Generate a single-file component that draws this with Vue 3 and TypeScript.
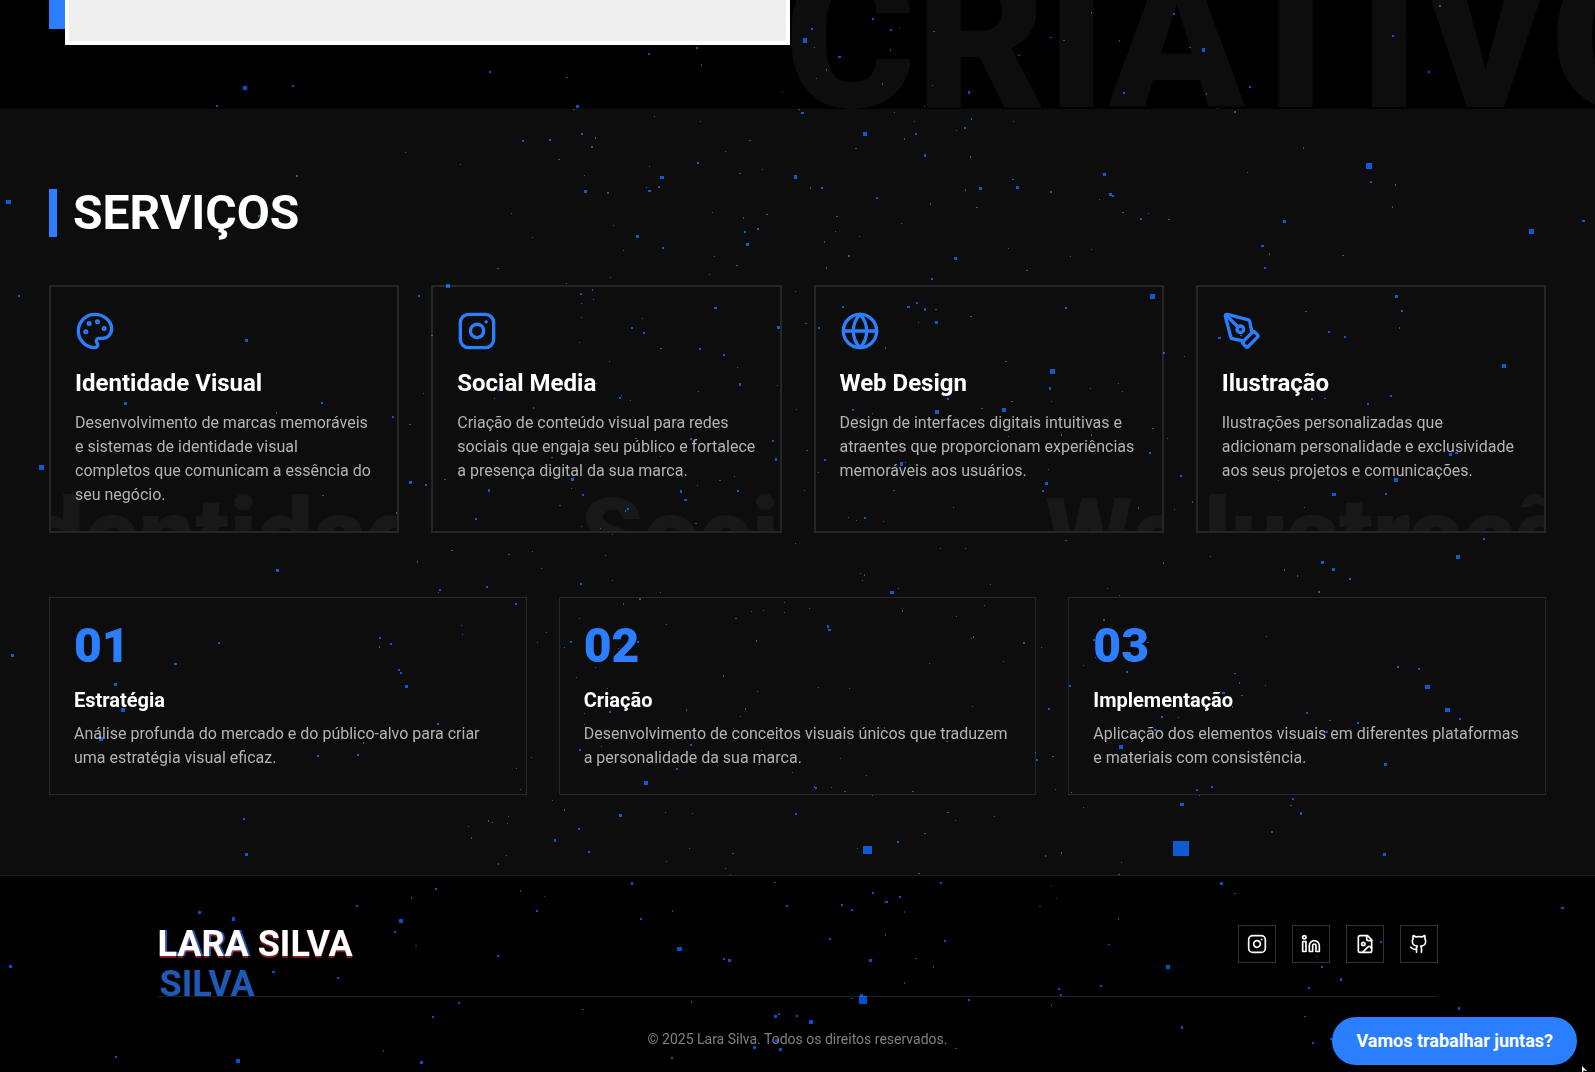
<script setup lang="ts">
interface Service {
  icon: 'palette' | 'instagram' | 'globe' | 'pen'
  title: string
  text: string
}

interface Step {
  number: string
  title: string
  text: string
}

const services: Service[] = [
  {
    icon: 'palette',
    title: 'Identidade Visual',
    text: 'Desenvolvimento de marcas memoráveis e sistemas de identidade visual completos que comunicam a essência do seu negócio.',
  },
  {
    icon: 'instagram',
    title: 'Social Media',
    text: 'Criação de conteúdo visual para redes sociais que engaja seu público e fortalece a presença digital da sua marca.',
  },
  {
    icon: 'globe',
    title: 'Web Design',
    text: 'Design de interfaces digitais intuitivas e atraentes que proporcionam experiências memoráveis aos usuários.',
  },
  {
    icon: 'pen',
    title: 'Ilustração',
    text: 'Ilustrações personalizadas que adicionam personalidade e exclusividade aos seus projetos e comunicações.',
  },
]

const steps: Step[] = [
  {
    number: '01',
    title: 'Estratégia',
    text: 'Análise profunda do mercado e do público-alvo para criar uma estratégia visual eficaz.',
  },
  {
    number: '02',
    title: 'Criação',
    text: 'Desenvolvimento de conceitos visuais únicos que traduzem a personalidade da sua marca.',
  },
  {
    number: '03',
    title: 'Implementação',
    text: 'Aplicação dos elementos visuais em diferentes plataformas e materiais com consistência.',
  },
]

const socials: string[] = ['Instagram', 'LinkedIn', 'Behance', 'GitHub']

const firstWord = (title: string): string => title.split(' ')[0]

// Particle field: x, y, width and (when it differs) height of each pixel block.
const particles: number[][] = [
  [243, 86, 4], [292, 85, 2], [216, 105, 2], [489, 71, 2], [405, 152, 1], [460, 164, 1], [522, 140, 2], [296, 175, 2],
  [6, 200, 5, 4], [258, 215, 2], [511, 213, 1], [497, 268, 2, 1], [648, 53, 2], [696, 47, 2], [701, 64, 1, 2],
  [566, 77, 2, 1], [576, 105, 3], [573, 109, 2, 1], [782, 92, 1], [811, 28, 2], [803, 38, 4, 5], [814, 47, 1],
  [838, 56, 3, 2], [826, 69, 1, 2], [816, 78, 1], [872, 18, 2], [890, 29, 2], [899, 27, 1], [933, 31, 2, 1],
  [890, 49, 1, 2], [882, 83, 1, 2], [932, 85, 1], [968, 91, 2, 3], [1018, 55, 2, 1], [1050, 37, 2, 1], [1063, 40, 2, 1],
  [924, 106, 1], [798, 109, 2, 1], [801, 112, 3, 2], [894, 112, 1], [914, 121, 1], [971, 118, 1, 2], [964, 127, 2],
  [956, 130, 1], [1013, 121, 1], [654, 116, 1], [700, 121, 1], [581, 133, 2], [595, 137, 1, 2], [549, 139, 2],
  [591, 146, 2], [558, 159, 2, 1], [584, 175, 1], [584, 190, 3], [607, 192, 2], [649, 166, 1], [660, 176, 4, 3],
  [697, 162, 2], [725, 151, 1], [749, 140, 2, 1], [762, 169, 1], [739, 173, 2, 1], [646, 187, 1], [648, 190, 3, 2],
  [658, 186, 2], [794, 175, 3, 4], [810, 187, 1, 2], [821, 187, 2], [863, 132, 4], [855, 148, 2, 1], [904, 138, 1, 2],
  [915, 133, 2], [924, 154, 2, 3], [970, 156, 1, 2], [876, 197, 2], [930, 203, 1, 2], [965, 189, 1, 2], [979, 187, 3],
  [1012, 179, 2, 1], [1016, 186, 3], [1050, 191, 2], [976, 207, 2, 1], [712, 212, 1], [743, 217, 1, 2], [766, 214, 2, 1],
  [757, 228, 2], [744, 231, 2], [746, 243, 3], [636, 235, 3], [613, 225, 1], [623, 250, 1], [662, 247, 2], [532, 237, 1],
  [714, 256, 1], [736, 265, 2, 1], [836, 216, 2, 1], [835, 231, 1], [859, 236, 1], [824, 241, 1, 2], [848, 255, 2],
  [826, 267, 1, 2], [901, 223, 1], [954, 257, 3], [1008, 248, 1], [1091, 12, 1, 2], [1119, 40, 1, 2], [1173, 13, 2],
  [1189, 47, 2, 1], [1202, 48, 3, 4], [1123, 92, 2], [1206, 93, 1, 2], [1249, 86, 2], [1217, 108, 1], [1234, 111, 2],
  [1392, 35, 2], [1428, 71, 2], [1439, 5, 2], [1303, 147, 1, 2], [1366, 163, 6], [1370, 181, 2], [1395, 184, 1, 2],
  [1247, 172, 1], [1103, 173, 3], [1109, 193, 3], [1112, 195, 2], [1099, 199, 1], [1122, 212, 2, 1], [1148, 213, 1],
  [1140, 218, 2], [1168, 219, 2, 1], [1392, 206, 1, 2], [1283, 220, 3], [1261, 245, 3, 2], [1269, 253, 1, 2],
  [1264, 267, 2], [1342, 255, 2, 1], [1091, 249, 1], [1070, 256, 1], [1529, 229, 5], [1582, 220, 3, 2],
  [18, 295, 2], [418, 295, 2], [245, 339, 3], [124, 402, 3], [321, 402, 2], [276, 412, 1, 2], [392, 416, 2],
  [409, 424, 2, 1], [423, 393, 1], [39, 465, 5], [409, 481, 3], [425, 484, 2], [322, 495, 2, 1], [396, 512, 1, 2],
  [446, 284, 4], [431, 335, 2, 1], [475, 389, 2, 1], [497, 389, 2], [494, 398, 1], [444, 479, 2, 1], [488, 489, 2, 3],
  [475, 518, 2], [451, 550, 2, 1], [508, 554, 2, 1], [610, 277, 1], [566, 283, 1], [592, 289, 1, 2], [593, 299, 1],
  [580, 293, 2], [581, 303, 1], [581, 317, 1], [579, 342, 1], [609, 361, 1], [631, 327, 2], [642, 318, 1], [643, 332, 2],
  [660, 348, 2, 1], [699, 348, 2], [714, 307, 3, 2], [709, 274, 1], [723, 354, 2], [737, 367, 1], [739, 383, 2, 3],
  [698, 391, 1], [777, 326, 3], [777, 385, 1], [795, 291, 1], [805, 323, 2, 1], [796, 409, 1], [818, 327, 2],
  [842, 306, 2], [907, 306, 3, 2], [916, 302, 2], [924, 308, 2, 3], [935, 309, 2, 1], [935, 321, 3], [918, 322, 1],
  [885, 347, 1, 2], [970, 316, 2, 1], [931, 278, 2], [1026, 270, 2, 1], [1005, 361, 2, 1], [1050, 369, 5],
  [1049, 387, 2, 3], [1051, 401, 1], [1011, 401, 2, 1], [1002, 408, 4], [981, 408, 2, 1], [935, 410, 4], [947, 398, 2],
  [872, 413, 1], [852, 409, 2], [933, 451, 2], [1008, 436, 1], [1061, 434, 1, 2], [619, 397, 2], [621, 395, 1],
  [630, 400, 1], [595, 383, 2, 1], [533, 407, 1, 2], [635, 438, 2, 1], [690, 438, 2], [675, 422, 2, 1], [660, 456, 1],
  [551, 457, 2, 1], [551, 472, 1, 2], [772, 440, 2], [775, 458, 2, 3], [725, 449, 1], [571, 478, 3], [571, 488, 1],
  [582, 494, 2], [559, 505, 2, 1], [682, 476, 1], [680, 490, 2, 3], [684, 499, 3, 2], [697, 485, 1], [719, 480, 2, 1],
  [734, 476, 1], [737, 490, 2], [695, 523, 2, 1], [627, 508, 2], [625, 510, 1, 2], [581, 526, 1], [600, 528, 1],
  [612, 534, 1], [532, 551, 1], [605, 555, 1], [795, 543, 1], [806, 450, 2, 1], [824, 459, 2], [818, 472, 1],
  [804, 490, 1], [900, 462, 3, 4], [905, 462, 1], [893, 490, 2, 1], [953, 507, 1], [848, 517, 1], [856, 520, 1],
  [864, 517, 2], [883, 521, 1], [1045, 482, 3], [1042, 490, 2], [1048, 469, 1], [940, 548, 1], [965, 548, 1],
  [1150, 294, 5], [1065, 307, 2], [1163, 352, 2], [1184, 356, 1], [1118, 383, 1], [1090, 388, 1], [1122, 391, 1],
  [1152, 428, 2, 1], [1167, 438, 1], [1091, 434, 1, 2], [1149, 452, 2], [1180, 475, 2], [1138, 507, 1, 2],
  [1192, 501, 1, 2], [1174, 509, 1], [1218, 337, 3, 2], [1240, 335, 2, 1], [1305, 311, 2, 1], [1328, 331, 2],
  [1344, 336, 2], [1395, 295, 3], [1401, 310, 2], [1399, 327, 1, 2], [1502, 364, 4], [1390, 395, 2], [1367, 403, 2],
  [1311, 398, 2], [1324, 398, 2, 1], [1302, 383, 1], [1264, 442, 1, 2], [1449, 453, 3], [1455, 452, 3, 2],
  [1394, 478, 4], [1385, 493, 2], [1332, 493, 4, 3], [1278, 480, 1], [1304, 507, 1], [1065, 540, 2, 1], [1210, 556, 1],
  [1483, 538, 2], [1456, 555, 4], [417, 561, 1, 2], [276, 569, 3], [439, 589, 2], [438, 592, 1], [486, 586, 2],
  [515, 603, 2], [461, 625, 1], [462, 634, 1], [379, 637, 2], [379, 646, 1, 2], [390, 643, 2], [218, 642, 2],
  [174, 663, 3, 2], [11, 654, 3], [114, 683, 3], [121, 708, 4], [99, 737, 4], [398, 669, 2], [400, 672, 2],
  [405, 685, 3], [437, 723, 2], [414, 740, 1, 2], [363, 742, 1, 2], [357, 754, 2], [317, 755, 2], [531, 757, 1],
  [516, 768, 1], [520, 789, 1], [243, 818, 2], [245, 853, 3], [468, 826, 1], [471, 837, 1, 2], [488, 820, 1, 2],
  [492, 822, 1], [508, 816, 1], [507, 823, 1], [506, 855, 1], [541, 568, 1], [580, 583, 2], [612, 580, 1], [660, 592, 1],
  [639, 598, 2], [623, 603, 1, 2], [579, 618, 1], [546, 632, 1], [537, 642, 1], [564, 647, 1], [570, 641, 2],
  [637, 641, 2], [618, 648, 1], [595, 667, 1], [576, 677, 1], [666, 624, 1], [607, 688, 1], [609, 711, 2], [584, 713, 1],
  [584, 724, 1], [650, 735, 2, 1], [601, 746, 1], [579, 749, 2], [690, 744, 2], [676, 768, 2], [644, 781, 4],
  [717, 765, 1], [723, 675, 1, 2], [740, 716, 1], [745, 708, 1, 2], [686, 709, 1, 2], [733, 728, 1], [757, 691, 1],
  [751, 611, 1], [763, 610, 1], [784, 602, 1], [784, 612, 1], [809, 608, 1], [735, 618, 2, 1], [756, 640, 1, 2],
  [827, 625, 2, 3], [828, 629, 3, 2], [761, 750, 1], [758, 764, 2, 1], [792, 772, 1], [818, 687, 1], [849, 688, 1],
  [840, 758, 1], [866, 775, 1], [814, 786, 1, 2], [815, 787, 2], [831, 787, 1], [844, 791, 2, 1], [872, 795, 1],
  [884, 727, 1, 2], [860, 573, 1], [864, 574, 1, 2], [862, 580, 1], [890, 591, 4, 3], [898, 588, 1], [902, 610, 1, 2],
  [956, 616, 1], [929, 663, 1], [971, 638, 1], [973, 636, 1, 2], [984, 605, 1], [990, 584, 1], [1003, 661, 1],
  [1023, 642, 2], [1041, 647, 1], [972, 706, 1], [946, 741, 2, 1], [1048, 708, 2], [1035, 752, 1], [1036, 759, 2],
  [1052, 756, 2, 1], [1055, 789, 1], [912, 791, 2, 1], [552, 800, 1], [564, 809, 1, 2], [619, 814, 3], [578, 828, 2],
  [554, 839, 2, 3], [588, 851, 2], [665, 812, 1], [692, 813, 1], [689, 848, 1], [732, 853, 2, 1], [795, 813, 2],
  [857, 848, 1], [863, 846, 9, 8], [897, 841, 2], [924, 833, 2, 1], [947, 812, 2, 1], [955, 820, 1], [994, 816, 1],
  [1045, 855, 1, 2], [1061, 852, 1, 2], [1163, 562, 1, 2], [1284, 569, 1, 2], [1297, 575, 1, 2], [1321, 561, 3],
  [1332, 568, 3], [1349, 578, 2], [1318, 591, 2], [1107, 588, 1], [1119, 595, 1], [1103, 619, 2], [1093, 639, 2],
  [1147, 642, 2, 1], [1095, 657, 1], [1083, 665, 1], [1126, 671, 2], [1069, 685, 2], [1266, 636, 1], [1234, 673, 2, 1],
  [1239, 682, 1, 2], [1265, 685, 1], [1241, 695, 2, 1], [1222, 692, 3, 2], [1232, 706, 1, 2], [1161, 716, 2],
  [1178, 717, 1], [1154, 729, 3, 2], [1173, 738, 2, 1], [1119, 745, 4], [1306, 712, 2], [1329, 720, 2, 1],
  [1357, 722, 2], [1326, 731, 2], [1397, 666, 2], [1418, 668, 2], [1425, 685, 5, 4], [1445, 708, 5, 4], [1459, 718, 2],
  [1384, 763, 3], [1196, 789, 2], [1211, 786, 2], [1199, 795, 1], [1071, 792, 1], [1083, 807, 1], [1180, 803, 4, 3],
  [1292, 798, 2], [1290, 805, 2, 1], [1300, 812, 2, 3], [1271, 831, 2], [1173, 841, 16, 15], [1383, 853, 3],
  [498, 863, 1, 2], [435, 888, 2], [520, 890, 1, 2], [411, 897, 1, 2], [356, 905, 2], [198, 911, 3], [232, 917, 3, 4],
  [399, 919, 4], [394, 931, 2], [415, 945, 2, 1], [497, 955, 2], [9, 965, 3], [272, 971, 3, 2], [337, 977, 2],
  [458, 1002, 2], [432, 1016, 2], [383, 1050, 1, 2], [420, 1061, 3], [236, 1059, 4], [115, 1056, 2], [666, 861, 1],
  [725, 868, 1], [730, 874, 1], [918, 873, 2, 1], [631, 882, 2, 3], [544, 896, 1], [536, 910, 2], [672, 910, 1, 2],
  [640, 918, 2], [774, 882, 2, 1], [786, 905, 2], [841, 904, 2], [851, 909, 2], [872, 892, 2], [885, 901, 3, 2],
  [899, 896, 2], [904, 911, 1, 2], [940, 882, 2], [1051, 885, 1], [1056, 898, 1], [1039, 906, 2, 1], [829, 938, 2],
  [885, 934, 1, 2], [944, 940, 2], [677, 947, 5, 4], [723, 958, 2], [728, 959, 3], [869, 959, 3], [915, 958, 2, 1],
  [933, 966, 1, 2], [904, 982, 1, 2], [860, 994, 3, 2], [859, 996, 8], [851, 998, 2, 1], [691, 1001, 1, 2],
  [582, 1009, 2, 1], [968, 999, 2], [1058, 988, 2], [1060, 994, 2], [1051, 1004, 1, 2], [774, 1015, 3], [778, 1013, 2],
  [796, 1015, 2], [809, 1020, 4], [703, 1041, 2, 1], [775, 1039, 3], [753, 1046, 3], [779, 1048, 3], [671, 1057, 2],
  [955, 1048, 2, 1], [1121, 862, 1], [1118, 874, 2, 1], [1220, 882, 3], [1234, 893, 2, 1], [1561, 907, 3, 2],
  [1118, 918, 1, 2], [1108, 944, 2, 1], [1380, 941, 2], [1316, 956, 1], [1321, 966, 2], [1340, 978, 2, 3],
  [1308, 987, 2], [1166, 965, 4], [1100, 985, 2], [1304, 1016, 2, 1], [1458, 1007, 2, 3], [1181, 1026, 2, 3],
  [1312, 1042, 2], [1330, 1038, 2],
]

const particlePath: string = particles
  .map(([x, y, w, h = w]) => `M${x} ${y}h${w}v${h}h${-w}z`)
  .join('')
</script>

<template>
  <div class="page">
    <section class="about">
      <div class="backdrop" aria-hidden="true">CRIATIVO</div>
      <div class="about-grid">
        <div class="portrait"><div class="portrait-frame"></div></div>
      </div>
    </section>

    <section class="services">
      <h2>SERVIÇOS</h2>

      <div class="service-grid">
        <article v-for="service in services" :key="service.title" class="service">
          <span class="ghost" aria-hidden="true">{{ firstWord(service.title) }}</span>
          <svg class="service-icon icon" viewBox="0 0 24 24" aria-hidden="true">
            <template v-if="service.icon === 'palette'">
              <circle cx="13.5" cy="6.5" r=".5" fill="currentColor" />
              <circle cx="17.5" cy="10.5" r=".5" fill="currentColor" />
              <circle cx="8.5" cy="7.5" r=".5" fill="currentColor" />
              <circle cx="6.5" cy="12.5" r=".5" fill="currentColor" />
              <path d="M12 2C6.5 2 2 6.5 2 12s4.5 10 10 10c.926 0 1.648-.746 1.648-1.688 0-.437-.18-.835-.437-1.125-.29-.289-.438-.652-.438-1.125a1.64 1.64 0 0 1 1.668-1.668h1.996c3.051 0 5.555-2.503 5.555-5.554C21.965 6.012 17.461 2 12 2z" />
            </template>
            <template v-else-if="service.icon === 'instagram'">
              <rect x="2" y="2" width="20" height="20" rx="5" />
              <path d="M16 11.37A4 4 0 1 1 12.63 8 4 4 0 0 1 16 11.37z" />
              <path d="M17.5 6.5h.01" />
            </template>
            <template v-else-if="service.icon === 'globe'">
              <circle cx="12" cy="12" r="10" />
              <path d="M12 2a14.5 14.5 0 0 0 0 20 14.5 14.5 0 0 0 0-20" />
              <path d="M2 12h20" />
            </template>
            <template v-else>
              <path d="M15.707 21.293a1 1 0 0 1-1.414 0l-1.586-1.586a1 1 0 0 1 0-1.414l5.586-5.586a1 1 0 0 1 1.414 0l1.586 1.586a1 1 0 0 1 0 1.414z" />
              <path d="m18 13-1.375-6.874a1 1 0 0 0-.746-.776L3.235 2.028a1 1 0 0 0-1.207 1.207L5.35 15.879a1 1 0 0 0 .776.746L13 18" />
              <path d="m2.3 2.3 7.286 7.286" />
              <circle cx="11" cy="11" r="2" />
            </template>
          </svg>
          <h3>{{ service.title }}</h3>
          <p>{{ service.text }}</p>
        </article>
      </div>

      <div class="step-grid">
        <article v-for="step in steps" :key="step.number" class="step">
          <div class="step-number">{{ step.number }}</div>
          <h4>{{ step.title }}</h4>
          <p>{{ step.text }}</p>
        </article>
      </div>
    </section>

    <footer>
      <div class="footer-inner">
        <div class="footer-top">
          <div class="brand" data-text="LARA SILVA">LARA SILVA</div>
          <nav class="socials" aria-label="Redes sociais">
            <a v-for="name in socials" :key="name" href="#" :aria-label="name">
              <svg class="icon" viewBox="0 0 24 24" aria-hidden="true">
                <template v-if="name === 'Instagram'">
                  <rect x="2" y="2" width="20" height="20" rx="5" />
                  <path d="M16 11.37A4 4 0 1 1 12.63 8 4 4 0 0 1 16 11.37z" />
                  <path d="M17.5 6.5h.01" />
                </template>
                <template v-else-if="name === 'LinkedIn'">
                  <path d="M16 8a6 6 0 0 1 6 6v7h-4v-7a2 2 0 0 0-4 0v7h-4v-7a6 6 0 0 1 6-6z" />
                  <rect x="2" y="9" width="4" height="12" />
                  <circle cx="4" cy="4" r="2" />
                </template>
                <template v-else-if="name === 'Behance'">
                  <path d="M15 2H6a2 2 0 0 0-2 2v16a2 2 0 0 0 2 2h12a2 2 0 0 0 2-2V7Z" />
                  <path d="M14 2v4a2 2 0 0 0 2 2h4" />
                  <circle cx="10" cy="12" r="2" />
                  <path d="m20 17-1.296-1.296a2.41 2.41 0 0 0-3.408 0L9 22" />
                </template>
                <template v-else>
                  <path d="M15 22v-4a4.8 4.8 0 0 0-1-3.5c3 0 6-2 6-5.5.08-1.25-.27-2.48-1-3.5.28-1.15.28-2.35 0-3.5 0 0-1 0-3 1.5-2.64-.5-5.36-.5-8 0C6 2 5 2 5 2c-.3 1.15-.3 2.35 0 3.5A5.403 5.403 0 0 0 4 9c0 3.5 3 5.5 6 5.5-.39.49-.68 1.05-.85 1.65-.17.6-.22 1.23-.15 1.85v4" />
                  <path d="M9 18c-4.51 2-5-2-7-2" />
                </template>
              </svg>
            </a>
          </nav>
        </div>
        <p class="copyright">© 2025 Lara Silva. Todos os direitos reservados.</p>
      </div>
    </footer>

    <svg class="particles" aria-hidden="true"><path :d="particlePath" /></svg>

    <button class="cta" type="button">Vamos trabalhar juntas?</button>
    <svg class="pointer" viewBox="0 0 5 6" aria-hidden="true">
      <path d="M0 0L5 5H3L2 4L1 6H0z" />
    </svg>
  </div>
</template>

<style>
body {
  margin: 0;
  background: #000;
}
</style>

<style scoped>
.page {
  display: flex;
  flex-direction: column;
  min-height: 100vh;
  position: relative;
  isolation: isolate;
  overflow: hidden;
  background: #000;
  color: #fff;
  font-family: Roboto, "Liberation Sans", sans-serif;
  font-size: 16px;
  line-height: 24px;
}

h2,
h3,
h4,
p {
  margin: 0;
}

.icon {
  display: block;
  fill: none;
  stroke: currentColor;
  stroke-width: 2;
  stroke-linecap: round;
  stroke-linejoin: round;
}

.about {
  position: relative;
  overflow: hidden;
  padding: 0 49px 80px;
}

.backdrop {
  position: absolute;
  left: calc(50% - 13px);
  bottom: -30px;
  color: #0d0d0d;
  font-size: 200px;
  font-weight: 900;
  line-height: 200px;
  white-space: nowrap;
}

.about-grid {
  display: grid;
  grid-template-columns: 1fr 1fr;
  gap: 48px;
}

.portrait {
  position: relative;
  height: 29px;
  background: #2b7fff;
}

.portrait-frame {
  position: absolute;
  inset: 0 -16px -16px 16px;
  border: 4px solid #fff;
  border-top: 0;
  background: #eee;
}

.services {
  padding: 80px 49px;
  background: #0d0d0d;
}

h2 {
  margin-bottom: 48px;
  padding-left: 16px;
  border-left: 8px solid #2b7fff;
  font-size: 48px;
  font-weight: 700;
  line-height: 48px;
}

.service-grid {
  display: grid;
  grid-template-columns: repeat(4, 1fr);
  gap: 32px;
  margin-bottom: 64px;
}

.service {
  position: relative;
  isolation: isolate;
  overflow: hidden;
  padding: 24px;
  border: 2px solid #262626;
}

.ghost {
  position: absolute;
  z-index: -1;
  right: -80px;
  bottom: -54px;
  color: #181818;
  font-size: 100px;
  font-weight: 900;
  line-height: 100px;
  white-space: nowrap;
}

.service-icon {
  width: 40px;
  height: 40px;
  margin-bottom: 16px;
  color: #2b7fff;
}

h3 {
  margin-bottom: 12px;
  font-size: 24px;
  font-weight: 700;
  line-height: 32px;
}

.service p,
.step p {
  color: #b3b3b3;
}

.step-grid {
  display: grid;
  grid-template-columns: repeat(3, 1fr);
  gap: 32px;
}

.step {
  padding: 24px;
  border: 1px solid #262626;
}

.step-number {
  margin-bottom: 16px;
  color: #2b7fff;
  font-size: 48px;
  font-weight: 900;
  line-height: 48px;
}

h4 {
  margin-bottom: 8px;
  font-size: 20px;
  font-weight: 700;
  line-height: 28px;
}

footer {
  flex: 1;
  padding: 48px 24px 16px;
  border-top: 1px solid #1f1f1f;
}

.footer-inner {
  max-width: 1280px;
  margin: 0 auto;
}

.footer-top {
  display: flex;
  align-items: center;
  justify-content: space-between;
  padding-bottom: 32px;
  border-bottom: 1px solid #1f1f1f;
}

.brand {
  position: relative;
  isolation: isolate;
  font-size: 36px;
  font-weight: 700;
  line-height: 40px;
}

.brand::before,
.brand::after {
  content: attr(data-text);
  position: absolute;
  z-index: -1;
  width: 100%;
}

.brand::before {
  top: 0;
  left: 2px;
  width: calc(100% - 4px);
  color: #2b7fff;
  opacity: 0.7;
}

.brand::after {
  top: 2px;
  left: 0;
  color: #ff3040;
  opacity: 0.5;
}

.socials {
  display: flex;
  gap: 16px;
}

.socials a {
  padding: 8px;
  border: 1px solid #333;
  color: #fff;
}

.socials svg {
  width: 20px;
  height: 20px;
}

.copyright {
  padding-top: 32px;
  color: #808080;
  font-size: 14px;
  line-height: 20px;
  text-align: center;
}

.particles {
  position: absolute;
  inset: 0;
  width: 100%;
  height: 100%;
  fill: #0052d0;
  mix-blend-mode: screen;
  pointer-events: none;
}

.cta {
  position: fixed;
  right: 18px;
  bottom: 7px;
  padding: 12px 24px;
  border: 0;
  border-radius: 24px;
  background: #2b7fff;
  color: #fff;
  font-family: inherit;
  font-size: 18px;
  font-weight: 700;
  line-height: 24px;
}

.pointer {
  position: fixed;
  right: 8px;
  bottom: 0;
  width: 5px;
  height: 6px;
  fill: #fff;
}
</style>
